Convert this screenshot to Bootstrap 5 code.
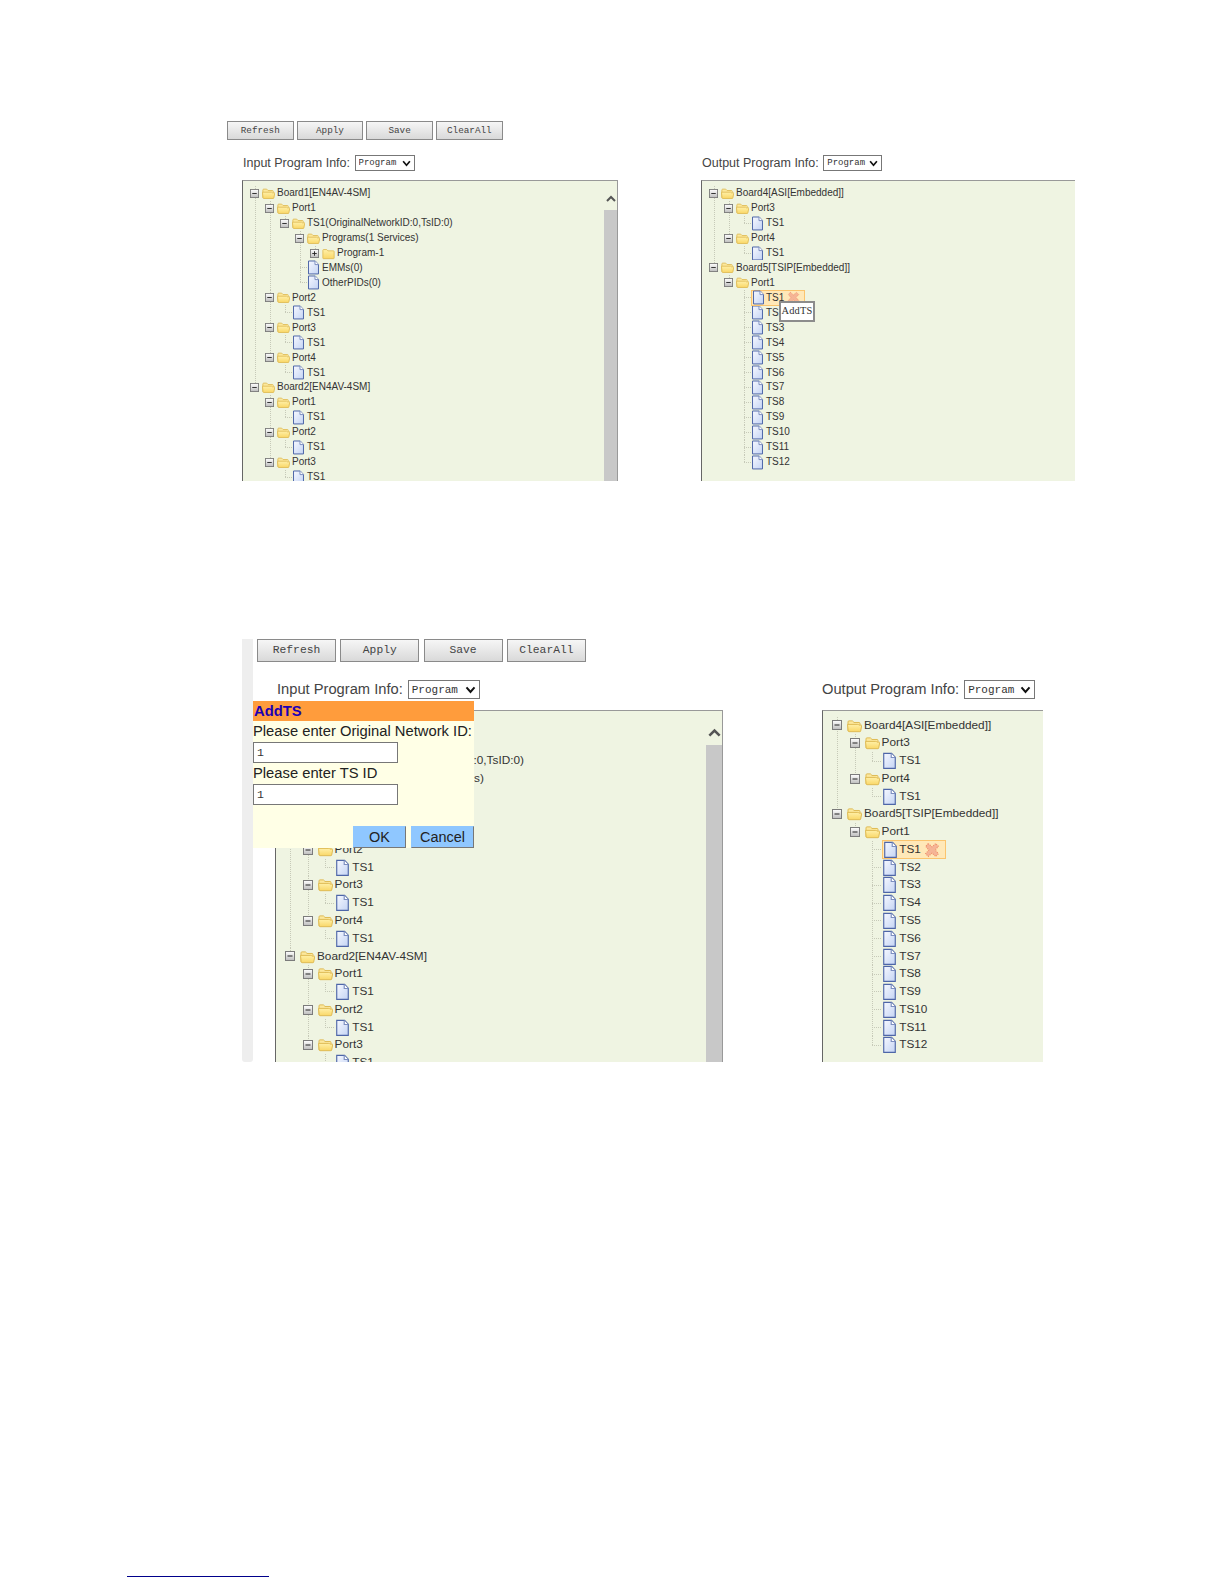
<!DOCTYPE html>
<html lang="en">
<head>
<meta charset="utf-8">
<title>AddTS</title>
<link href="https://cdn.jsdelivr.net/npm/bootstrap@5.3.0/dist/css/bootstrap.min.css" rel="stylesheet">
<style>
body{background:#fff;font-family:"Liberation Sans",Arial,sans-serif;color:#333}
.tdefs{position:absolute;width:0;height:0}
.shota{--rh:14.94px;--ind:15px;--bw:9px;--bg:3px;--ic:13px;--fs:10px;--pt:4.8px;--pl:7px;--btnh:19px;--btnw:66.5px;--btnfs:9.3px;--lblfs:12.5px;--selh:16px;--selfs:9px;--chw:9px;--chh:7px;--sbw:13px;--sbh:29px;--sbp:6px;--treeh:301px;--hw:54px;--xs:13px;
  margin:121px 0 0 227px}
.shotb{--rh:17.78px;--ind:17.6px;--bw:10px;--bg:5px;--ic:15px;--fs:11.8px;--pt:5.6px;--pl:9px;--btnh:23px;--btnw:79px;--btnfs:11.3px;--lblfs:14.7px;--selh:19px;--selfs:11px;--chw:11px;--chh:8px;--sbw:16px;--sbh:34px;--sbp:8px;--treeh:352px;--hw:64px;--xs:16px;
  margin:158px 0 0 242px}
.ttool{display:flex}
.shota .ttool{gap:3.2px}
.shotb .ttool{gap:4.3px;margin-left:4px}
.tbtn{width:var(--btnw);height:var(--btnh);padding:0;border:1px solid #8a8a8a;border-radius:0;background:linear-gradient(#f6f6f6,#d9d9d9);font:var(--btnfs)/1 "Liberation Mono",monospace;color:#444}
.tlabel{display:flex;align-items:center;height:var(--selh);font-size:var(--lblfs);color:#444;white-space:nowrap}
.tsel.form-select{display:inline-block;height:var(--selh);min-height:0;padding:1px 0 0 3px;border:1px solid #777;border-radius:0;font:var(--selfs)/1 "Liberation Mono",monospace;color:#333;background-image:url("data:image/svg+xml,%3csvg xmlns='http://www.w3.org/2000/svg' viewBox='0 0 16 12'%3e%3cpath fill='none' stroke='%23111' stroke-width='3' d='M2 2l6 7 6-7'/%3e%3c/svg%3e");background-position:right 3px center;background-size:var(--chw) var(--chh);box-shadow:none}
.shota .tsel{width:60px;margin-left:4.5px}
.shota .tp2 .tsel{width:59px}
.shotb .tsel{width:72px;margin-left:5px}
.shotb .tp2 .tsel{width:71px}
.tpanes{display:flex}
.shota .tpanes{margin-top:15px}
.shotb .tpanes{margin-top:18px}
.shota .tlabel{margin-bottom:9px;padding-left:1px}
.shotb .tlabel{margin-bottom:11px}
.shota .tp1{width:376px;margin-left:15px}
.shota .tp2{width:374px;margin-left:83px}
.shotb .tp1{width:448px;margin-left:22px}
.shotb .tp1 .tlabel{padding-left:2px}
.shotb .tp2{width:221px;margin-left:99px}
.ttree{display:flex;height:var(--treeh);background:#eff4e2;border:1px solid #999;border-left-color:#666;border-bottom:0;overflow:hidden}
.tp2 .ttree{border-right:0}
.tscr{flex:1 1 auto;min-width:0;overflow:hidden;padding:var(--pt) 0 0 var(--pl)}
.tsb{flex:0 0 var(--sbw);display:flex;flex-direction:column}
.tsbu{flex:0 0 var(--sbh);display:flex;align-items:center;justify-content:center;padding-top:var(--sbp)}
.tsbu svg{width:calc(var(--sbw) - 3px);height:9px}
.tsbt{flex:1 1 auto;background:#c8c8c8}
.tnode{--dots:repeating-linear-gradient(#c6c9b8 0 1px,transparent 1px 2px);background:var(--dots) calc(var(--bw) / 2) 0/1px 100% no-repeat}
.tnode:last-child{background:none}
.tnode:last-child>.trow{background:var(--dots) calc(var(--bw) / 2) 0/1px 50% no-repeat}
.tsub{padding-left:var(--ind)}
.trow{display:flex;align-items:center;height:var(--rh);font-size:var(--fs);line-height:1;color:#333;white-space:nowrap}
.tsw{flex:0 0 var(--bw);width:var(--bw);height:var(--bw);margin-right:var(--bg)}
.tjn{flex:0 0 calc(var(--bw) + var(--bg));height:1px;background:repeating-linear-gradient(90deg,#c6c9b8 0 1px,transparent 1px 2px) calc(var(--bw) / 2) center/100% 1px no-repeat}
.tico{flex:0 0 var(--ic);width:var(--ic);height:var(--rh);margin-right:2px}
.thl{position:relative;display:flex;align-items:center;width:var(--hw);height:calc(var(--rh) + 1px);background:#ffe8b8;border:1px solid #fbc46e}
.thl .tico{margin-right:1px}
.thx{width:var(--xs);height:var(--xs);margin-left:3px}
.ttip{position:absolute;left:27px;top:10px;width:36px;height:21px;display:flex;align-items:center;justify-content:center;background:#fff;border:2px solid #8c8c8c;font:10.4px/1 "Liberation Serif",serif;letter-spacing:.2px;color:#333;z-index:2}
.tbody2{position:relative;flex:1 1 auto;min-width:0}
.tstrip{flex:0 0 11px;background:#eee;border-radius:0 0 3px 3px}
.tdlg{position:absolute;left:0;top:62px;width:221px;height:147px;background:#ffffe6;display:flex;flex-direction:column;z-index:3;color:#222}
.tdlgh{height:20px;padding-left:1px;background:#ff9c3c;font-size:14.8px;font-weight:700;line-height:20px;color:#1c00b4}
.tdlgl{height:21px;font-size:14.75px;line-height:21px;white-space:nowrap}
.tdlgi.form-control{width:145px;height:21px;min-height:0;padding:0 3px;border:1px solid #777;border-radius:0;font:11.5px/1 "Liberation Mono",monospace;color:#333;box-shadow:none}
.tdlgb{margin-top:auto;display:flex;justify-content:flex-end;gap:5px}
.tok{height:22px;padding:0;border:1px solid #8fc7ff;border-right-color:#777;border-bottom-color:#777;border-radius:0;background:#8fc7ff;font-size:14.45px;line-height:1;color:#222}
.tok1{width:53px}
.tok2{width:63px}
.tfoot{width:142px;margin:514px 0 0 127px;border-top:1px solid #00008b}
</style>
</head>
<body>
<svg class="tdefs" aria-hidden="true">
<defs>
<linearGradient id="gb" x1="0" y1="0" x2="0" y2="1"><stop offset="0" stop-color="#fff"/><stop offset="1" stop-color="#bdbdbd"/></linearGradient>
<linearGradient id="gf" x1="0" y1="0" x2="0" y2="1"><stop offset="0" stop-color="#fff0a8"/><stop offset="1" stop-color="#f9d767"/></linearGradient>
<linearGradient id="gd" x1="0" y1="0" x2="1" y2="1"><stop offset="0" stop-color="#f6f8ff"/><stop offset="1" stop-color="#c4d4f4"/></linearGradient>
<symbol id="tm" viewBox="0 0 10 10"><rect x=".5" y=".5" width="9" height="9" fill="url(#gb)" stroke="#7b7b7b"/><path d="M2.5 5h5" stroke="#222" stroke-width="1"/></symbol>
<symbol id="tp" viewBox="0 0 10 10"><rect x=".5" y=".5" width="9" height="9" fill="url(#gb)" stroke="#7b7b7b"/><path d="M2.5 5h5M5 2.500v5" stroke="#222" stroke-width="1"/></symbol>
<symbol id="tf" viewBox="0 0 15 15"><path d="M1 12.500V3.500q0-1 1-1h3.400l1.600 1.600h5q1 0 1 1v1.400" fill="#fce89c" stroke="#dfbb55"/><path d="M.5 6h10.300q.7 0 1.200.7h2.300q.6 0 .4.7l-1 5.200q-.1.7-.8.7H2q-.7 0-.8-.7z" fill="url(#gf)" stroke="#dfbb55"/></symbol>
<symbol id="tc" viewBox="0 0 15 15"><path d="M1 13V3.800q0-.8.8-.8h3.600l1.500 1.500h6.300q.8 0 .8.8V13q0 .5-.8.5H1.800Q1 13.500 1 13z" fill="url(#gf)" stroke="#dfbb55"/></symbol>
<symbol id="td" viewBox="0 0 13 15"><path d="M1.500 1h6.800l3.200 3.400v9.600h-10z" fill="url(#gd)" stroke="#4e66a8"/><path d="M8 1v3.600h3.500" fill="#fff" stroke="#7d8fc0"/></symbol>
<symbol id="tx" viewBox="0 0 15 15"><path d="M4 1.500L7.500 4.500 11 1.500 13.500 4 10.500 7.500 13.500 11 11 13.500 7.500 10.500 4 13.500 1.500 11 4.500 7.500 1.500 4z" fill="#f5b596" stroke="#ef8d68" stroke-dasharray="1 1"/></symbol>
</defs>
</svg>

<section class="shota">
  <div class="ttool">
    <button type="button" class="btn tbtn">Refresh</button>
    <button type="button" class="btn tbtn">Apply</button>
    <button type="button" class="btn tbtn">Save</button>
    <button type="button" class="btn tbtn">ClearAll</button>
  </div>
  <div class="tpanes">
    <div class="tp1">
      <div class="tlabel">Input Program Info:<select class="form-select tsel"><option>Program</option></select></div>
      <div class="ttree">
        <div class="tscr">
          <div class="tnode"><div class="trow"><svg class="tsw"><use href="#tm"/></svg><svg class="tico"><use href="#tf"/></svg><span>Board1[EN4AV-4SM]</span></div>
            <div class="tsub">
              <div class="tnode"><div class="trow"><svg class="tsw"><use href="#tm"/></svg><svg class="tico"><use href="#tf"/></svg><span>Port1</span></div>
                <div class="tsub">
                  <div class="tnode"><div class="trow"><svg class="tsw"><use href="#tm"/></svg><svg class="tico"><use href="#tf"/></svg><span>TS1(OriginalNetworkID:0,TsID:0)</span></div>
                    <div class="tsub">
                      <div class="tnode"><div class="trow"><svg class="tsw"><use href="#tm"/></svg><svg class="tico"><use href="#tf"/></svg><span>Programs(1 Services)</span></div>
                        <div class="tsub"><div class="tnode"><div class="trow"><svg class="tsw"><use href="#tp"/></svg><svg class="tico"><use href="#tc"/></svg><span>Program-1</span></div></div></div>
                      </div>
                      <div class="tnode"><div class="trow"><span class="tjn"></span><svg class="tico"><use href="#td"/></svg><span>EMMs(0)</span></div></div>
                      <div class="tnode"><div class="trow"><span class="tjn"></span><svg class="tico"><use href="#td"/></svg><span>OtherPIDs(0)</span></div></div>
                    </div>
                  </div>
                </div>
              </div>
              <div class="tnode"><div class="trow"><svg class="tsw"><use href="#tm"/></svg><svg class="tico"><use href="#tf"/></svg><span>Port2</span></div><div class="tsub"><div class="tnode"><div class="trow"><span class="tjn"></span><svg class="tico"><use href="#td"/></svg><span>TS1</span></div></div></div></div>
              <div class="tnode"><div class="trow"><svg class="tsw"><use href="#tm"/></svg><svg class="tico"><use href="#tf"/></svg><span>Port3</span></div><div class="tsub"><div class="tnode"><div class="trow"><span class="tjn"></span><svg class="tico"><use href="#td"/></svg><span>TS1</span></div></div></div></div>
              <div class="tnode"><div class="trow"><svg class="tsw"><use href="#tm"/></svg><svg class="tico"><use href="#tf"/></svg><span>Port4</span></div><div class="tsub"><div class="tnode"><div class="trow"><span class="tjn"></span><svg class="tico"><use href="#td"/></svg><span>TS1</span></div></div></div></div>
            </div>
          </div>
          <div class="tnode"><div class="trow"><svg class="tsw"><use href="#tm"/></svg><svg class="tico"><use href="#tf"/></svg><span>Board2[EN4AV-4SM]</span></div>
            <div class="tsub">
              <div class="tnode"><div class="trow"><svg class="tsw"><use href="#tm"/></svg><svg class="tico"><use href="#tf"/></svg><span>Port1</span></div><div class="tsub"><div class="tnode"><div class="trow"><span class="tjn"></span><svg class="tico"><use href="#td"/></svg><span>TS1</span></div></div></div></div>
              <div class="tnode"><div class="trow"><svg class="tsw"><use href="#tm"/></svg><svg class="tico"><use href="#tf"/></svg><span>Port2</span></div><div class="tsub"><div class="tnode"><div class="trow"><span class="tjn"></span><svg class="tico"><use href="#td"/></svg><span>TS1</span></div></div></div></div>
              <div class="tnode"><div class="trow"><svg class="tsw"><use href="#tm"/></svg><svg class="tico"><use href="#tf"/></svg><span>Port3</span></div><div class="tsub"><div class="tnode"><div class="trow"><span class="tjn"></span><svg class="tico"><use href="#td"/></svg><span>TS1</span></div></div></div></div>
            </div>
          </div>
        </div>
        <div class="tsb"><div class="tsbu"><svg viewBox="0 0 10 7"><path d="M1 6l4-4 4 4" fill="none" stroke="#555" stroke-width="2"/></svg></div><div class="tsbt"></div></div>
      </div>
    </div>
    <div class="tp2">
      <div class="tlabel">Output Program Info:<select class="form-select tsel"><option>Program</option></select></div>
      <div class="ttree">
        <div class="tscr">
          <div class="tnode"><div class="trow"><svg class="tsw"><use href="#tm"/></svg><svg class="tico"><use href="#tf"/></svg><span>Board4[ASI[Embedded]]</span></div>
            <div class="tsub">
              <div class="tnode"><div class="trow"><svg class="tsw"><use href="#tm"/></svg><svg class="tico"><use href="#tf"/></svg><span>Port3</span></div><div class="tsub"><div class="tnode"><div class="trow"><span class="tjn"></span><svg class="tico"><use href="#td"/></svg><span>TS1</span></div></div></div></div>
              <div class="tnode"><div class="trow"><svg class="tsw"><use href="#tm"/></svg><svg class="tico"><use href="#tf"/></svg><span>Port4</span></div><div class="tsub"><div class="tnode"><div class="trow"><span class="tjn"></span><svg class="tico"><use href="#td"/></svg><span>TS1</span></div></div></div></div>
            </div>
          </div>
          <div class="tnode"><div class="trow"><svg class="tsw"><use href="#tm"/></svg><svg class="tico"><use href="#tf"/></svg><span>Board5[TSIP[Embedded]]</span></div>
            <div class="tsub">
              <div class="tnode"><div class="trow"><svg class="tsw"><use href="#tm"/></svg><svg class="tico"><use href="#tf"/></svg><span>Port1</span></div>
                <div class="tsub">
                  <div class="tnode"><div class="trow"><span class="tjn"></span><div class="thl"><svg class="tico"><use href="#td"/></svg><span>TS1</span><svg class="thx"><use href="#tx"/></svg><div class="ttip">AddTS</div></div></div></div>
                  <div class="tnode"><div class="trow"><span class="tjn"></span><svg class="tico"><use href="#td"/></svg><span>TS2</span></div></div>
                  <div class="tnode"><div class="trow"><span class="tjn"></span><svg class="tico"><use href="#td"/></svg><span>TS3</span></div></div>
                  <div class="tnode"><div class="trow"><span class="tjn"></span><svg class="tico"><use href="#td"/></svg><span>TS4</span></div></div>
                  <div class="tnode"><div class="trow"><span class="tjn"></span><svg class="tico"><use href="#td"/></svg><span>TS5</span></div></div>
                  <div class="tnode"><div class="trow"><span class="tjn"></span><svg class="tico"><use href="#td"/></svg><span>TS6</span></div></div>
                  <div class="tnode"><div class="trow"><span class="tjn"></span><svg class="tico"><use href="#td"/></svg><span>TS7</span></div></div>
                  <div class="tnode"><div class="trow"><span class="tjn"></span><svg class="tico"><use href="#td"/></svg><span>TS8</span></div></div>
                  <div class="tnode"><div class="trow"><span class="tjn"></span><svg class="tico"><use href="#td"/></svg><span>TS9</span></div></div>
                  <div class="tnode"><div class="trow"><span class="tjn"></span><svg class="tico"><use href="#td"/></svg><span>TS10</span></div></div>
                  <div class="tnode"><div class="trow"><span class="tjn"></span><svg class="tico"><use href="#td"/></svg><span>TS11</span></div></div>
                  <div class="tnode"><div class="trow"><span class="tjn"></span><svg class="tico"><use href="#td"/></svg><span>TS12</span></div></div>
                </div>
              </div>
            </div>
          </div>
        </div>
      </div>
    </div>
  </div>
</section>

<section class="shotb d-flex">
  <div class="tstrip"></div>
  <div class="tbody2">
    <div class="ttool">
      <button type="button" class="btn tbtn">Refresh</button>
      <button type="button" class="btn tbtn">Apply</button>
      <button type="button" class="btn tbtn">Save</button>
      <button type="button" class="btn tbtn">ClearAll</button>
    </div>
    <div class="tpanes">
      <div class="tp1">
        <div class="tlabel">Input Program Info:<select class="form-select tsel"><option>Program</option></select></div>
        <div class="ttree">
          <div class="tscr">
            <div class="tnode"><div class="trow"><svg class="tsw"><use href="#tm"/></svg><svg class="tico"><use href="#tf"/></svg><span>Board1[EN4AV-4SM]</span></div>
              <div class="tsub">
                <div class="tnode"><div class="trow"><svg class="tsw"><use href="#tm"/></svg><svg class="tico"><use href="#tf"/></svg><span>Port1</span></div>
                  <div class="tsub">
                    <div class="tnode"><div class="trow"><svg class="tsw"><use href="#tm"/></svg><svg class="tico"><use href="#tf"/></svg><span>TS1(OriginalNetworkID:0,TsID:0)</span></div>
                      <div class="tsub">
                        <div class="tnode"><div class="trow"><svg class="tsw"><use href="#tm"/></svg><svg class="tico"><use href="#tf"/></svg><span>Programs(1 Services)</span></div>
                          <div class="tsub"><div class="tnode"><div class="trow"><svg class="tsw"><use href="#tp"/></svg><svg class="tico"><use href="#tc"/></svg><span>Program-1</span></div></div></div>
                        </div>
                        <div class="tnode"><div class="trow"><span class="tjn"></span><svg class="tico"><use href="#td"/></svg><span>EMMs(0)</span></div></div>
                        <div class="tnode"><div class="trow"><span class="tjn"></span><svg class="tico"><use href="#td"/></svg><span>OtherPIDs(0)</span></div></div>
                      </div>
                    </div>
                  </div>
                </div>
                <div class="tnode"><div class="trow"><svg class="tsw"><use href="#tm"/></svg><svg class="tico"><use href="#tf"/></svg><span>Port2</span></div><div class="tsub"><div class="tnode"><div class="trow"><span class="tjn"></span><svg class="tico"><use href="#td"/></svg><span>TS1</span></div></div></div></div>
                <div class="tnode"><div class="trow"><svg class="tsw"><use href="#tm"/></svg><svg class="tico"><use href="#tf"/></svg><span>Port3</span></div><div class="tsub"><div class="tnode"><div class="trow"><span class="tjn"></span><svg class="tico"><use href="#td"/></svg><span>TS1</span></div></div></div></div>
                <div class="tnode"><div class="trow"><svg class="tsw"><use href="#tm"/></svg><svg class="tico"><use href="#tf"/></svg><span>Port4</span></div><div class="tsub"><div class="tnode"><div class="trow"><span class="tjn"></span><svg class="tico"><use href="#td"/></svg><span>TS1</span></div></div></div></div>
              </div>
            </div>
            <div class="tnode"><div class="trow"><svg class="tsw"><use href="#tm"/></svg><svg class="tico"><use href="#tf"/></svg><span>Board2[EN4AV-4SM]</span></div>
              <div class="tsub">
                <div class="tnode"><div class="trow"><svg class="tsw"><use href="#tm"/></svg><svg class="tico"><use href="#tf"/></svg><span>Port1</span></div><div class="tsub"><div class="tnode"><div class="trow"><span class="tjn"></span><svg class="tico"><use href="#td"/></svg><span>TS1</span></div></div></div></div>
                <div class="tnode"><div class="trow"><svg class="tsw"><use href="#tm"/></svg><svg class="tico"><use href="#tf"/></svg><span>Port2</span></div><div class="tsub"><div class="tnode"><div class="trow"><span class="tjn"></span><svg class="tico"><use href="#td"/></svg><span>TS1</span></div></div></div></div>
                <div class="tnode"><div class="trow"><svg class="tsw"><use href="#tm"/></svg><svg class="tico"><use href="#tf"/></svg><span>Port3</span></div><div class="tsub"><div class="tnode"><div class="trow"><span class="tjn"></span><svg class="tico"><use href="#td"/></svg><span>TS1</span></div></div></div></div>
              </div>
            </div>
          </div>
          <div class="tsb"><div class="tsbu"><svg viewBox="0 0 10 7"><path d="M1 6l4-4 4 4" fill="none" stroke="#555" stroke-width="2"/></svg></div><div class="tsbt"></div></div>
        </div>
      </div>
      <div class="tp2">
        <div class="tlabel">Output Program Info:<select class="form-select tsel"><option>Program</option></select></div>
        <div class="ttree">
          <div class="tscr">
            <div class="tnode"><div class="trow"><svg class="tsw"><use href="#tm"/></svg><svg class="tico"><use href="#tf"/></svg><span>Board4[ASI[Embedded]]</span></div>
              <div class="tsub">
                <div class="tnode"><div class="trow"><svg class="tsw"><use href="#tm"/></svg><svg class="tico"><use href="#tf"/></svg><span>Port3</span></div><div class="tsub"><div class="tnode"><div class="trow"><span class="tjn"></span><svg class="tico"><use href="#td"/></svg><span>TS1</span></div></div></div></div>
                <div class="tnode"><div class="trow"><svg class="tsw"><use href="#tm"/></svg><svg class="tico"><use href="#tf"/></svg><span>Port4</span></div><div class="tsub"><div class="tnode"><div class="trow"><span class="tjn"></span><svg class="tico"><use href="#td"/></svg><span>TS1</span></div></div></div></div>
              </div>
            </div>
            <div class="tnode"><div class="trow"><svg class="tsw"><use href="#tm"/></svg><svg class="tico"><use href="#tf"/></svg><span>Board5[TSIP[Embedded]]</span></div>
              <div class="tsub">
                <div class="tnode"><div class="trow"><svg class="tsw"><use href="#tm"/></svg><svg class="tico"><use href="#tf"/></svg><span>Port1</span></div>
                  <div class="tsub">
                    <div class="tnode"><div class="trow"><span class="tjn"></span><div class="thl"><svg class="tico"><use href="#td"/></svg><span>TS1</span><svg class="thx"><use href="#tx"/></svg></div></div></div>
                    <div class="tnode"><div class="trow"><span class="tjn"></span><svg class="tico"><use href="#td"/></svg><span>TS2</span></div></div>
                    <div class="tnode"><div class="trow"><span class="tjn"></span><svg class="tico"><use href="#td"/></svg><span>TS3</span></div></div>
                    <div class="tnode"><div class="trow"><span class="tjn"></span><svg class="tico"><use href="#td"/></svg><span>TS4</span></div></div>
                    <div class="tnode"><div class="trow"><span class="tjn"></span><svg class="tico"><use href="#td"/></svg><span>TS5</span></div></div>
                    <div class="tnode"><div class="trow"><span class="tjn"></span><svg class="tico"><use href="#td"/></svg><span>TS6</span></div></div>
                    <div class="tnode"><div class="trow"><span class="tjn"></span><svg class="tico"><use href="#td"/></svg><span>TS7</span></div></div>
                    <div class="tnode"><div class="trow"><span class="tjn"></span><svg class="tico"><use href="#td"/></svg><span>TS8</span></div></div>
                    <div class="tnode"><div class="trow"><span class="tjn"></span><svg class="tico"><use href="#td"/></svg><span>TS9</span></div></div>
                    <div class="tnode"><div class="trow"><span class="tjn"></span><svg class="tico"><use href="#td"/></svg><span>TS10</span></div></div>
                    <div class="tnode"><div class="trow"><span class="tjn"></span><svg class="tico"><use href="#td"/></svg><span>TS11</span></div></div>
                    <div class="tnode"><div class="trow"><span class="tjn"></span><svg class="tico"><use href="#td"/></svg><span>TS12</span></div></div>
                  </div>
                </div>
              </div>
            </div>
          </div>
        </div>
      </div>
    </div>
    <div class="tdlg">
      <div class="tdlgh">AddTS</div>
      <div class="tdlgl">Please enter Original Network ID:</div>
      <input class="form-control tdlgi" type="text" value="1">
      <div class="tdlgl">Please enter TS ID</div>
      <input class="form-control tdlgi" type="text" value="1">
      <div class="tdlgb">
        <button type="button" class="btn tok tok1">OK</button>
        <button type="button" class="btn tok tok2">Cancel</button>
      </div>
    </div>
  </div>
</section>
<div class="tfoot"></div>
<script src="https://cdn.jsdelivr.net/npm/bootstrap@5.3.0/dist/js/bootstrap.bundle.min.js"></script>
</body>
</html>
